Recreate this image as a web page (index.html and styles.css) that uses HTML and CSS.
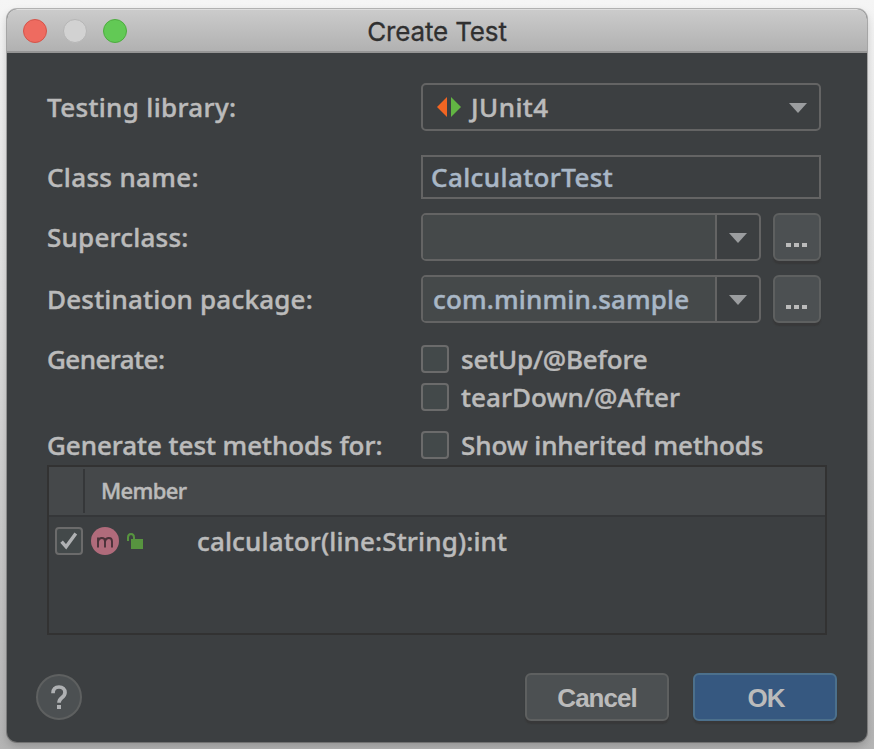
FILE: index.html
```html
<!DOCTYPE html>
<html lang="en">
<head>
<meta charset="utf-8">
<title>Create Test</title>
<link rel="stylesheet" href="styles.css">
</head>
<body>
<main class="window">
  <header class="titlebar">
    <div class="lights"><i class="light close"></i><i class="light minimize"></i><i class="light expand"></i></div>
    <h1 class="title">Create Test</h1>
  </header>
  <form class="content">
    <div class="row row-library">
      <label class="label"><span class="t-library">Testing library:</span></label>
      <div class="select">
        <svg class="junit" width="24" height="20" viewBox="0 0 24 20"><path d="M10 0v20L0 10z" fill="#f26522"/><path d="M14 0v20l10-10z" fill="#62b543"/></svg>
        <span class="t-junit">JUnit4</span>
        <svg class="arrow" width="18" height="10" viewBox="0 0 18 10"><path d="M0 0h18L9 10z"/></svg>
      </div>
    </div>
    <div class="row row-class">
      <label class="label"><span class="t-class">Class name:</span></label>
      <div class="input"><span class="t-classname">CalculatorTest</span></div>
    </div>
    <div class="row row-combo">
      <label class="label"><span class="t-super">Superclass:</span></label>
      <div class="combo"><div class="field"></div><div class="drop"><svg class="arrow" width="18" height="10" viewBox="0 0 18 10"><path d="M0 0h18L9 10z"/></svg></div></div>
      <div class="button browse"><i></i><i></i><i></i></div>
    </div>
    <div class="row row-combo">
      <label class="label"><span class="t-package">Destination package:</span></label>
      <div class="combo"><div class="field"><span class="t-com">com.minmin.sample</span></div><div class="drop"><svg class="arrow" width="18" height="10" viewBox="0 0 18 10"><path d="M0 0h18L9 10z"/></svg></div></div>
      <div class="button browse"><i></i><i></i><i></i></div>
    </div>
    <div class="row row-generate">
      <label class="label"><span class="t-generate">Generate:</span></label>
      <div class="checks">
        <div class="check"><i class="box"></i><span class="t-setup">setUp/@Before</span></div>
        <div class="check"><i class="box"></i><span class="t-teardown">tearDown/@After</span></div>
      </div>
    </div>
    <div class="row row-methods">
      <label class="label"><span class="t-methods">Generate test methods for:</span></label>
      <div class="check"><i class="box"></i><span class="t-inherited">Show inherited methods</span></div>
    </div>
    <section class="table">
      <div class="thead"><div class="th-check"></div><div class="th-member"><span class="t-member">Member</span></div></div>
      <div class="tr">
        <i class="box"><svg width="24" height="24" viewBox="0 0 24 24"><path d="M4.600 12.600l4.500 5.200L18.800 4.600" fill="none" stroke="#afb1b3" stroke-width="3.400"/></svg></i>
        <svg class="method" width="28" height="28" viewBox="0 0 28 28"><circle cx="14" cy="14" r="14" fill="#b06b7b"/><path d="M7 20.500v-10M7 14.500q.6-3.500 3.800-3.500 3.200 0 3.200 3.400v6.100M14 14.500q.6-3.500 3.800-3.500 3.200 0 3.200 3.400v6.100" fill="none" stroke="#4a3239" stroke-width="1.900"/></svg>
        <svg class="lock" width="16" height="16" viewBox="0 0 16 16"><path d="M4 6h12v10H4z" fill="#57943f"/><path d="M1 8V4.500Q1 1 4 1t3 3.500V7" fill="none" stroke="#57943f" stroke-width="2"/></svg>
        <span class="t-calc">calculator(line:String):int</span>
      </div>
    </section>
    <footer class="footer">
      <div class="help"><svg width="16" height="24" viewBox="0 0 16 24"><path d="M2 8.200C2 4.200 4.200 2 8 2s6 2.200 6 5.500c0 2.600-1.400 3.900-3.200 5.300C9 14.200 8 15.200 8 17.800" fill="none" stroke="#afb1b3" stroke-width="3.700"/><path d="M6 20h4v4H6z" fill="#afb1b3"/></svg></div>
      <div class="button cancel"><span class="t-cancel">Cancel</span></div>
      <div class="button ok"><span class="t-ok">OK</span></div>
    </footer>
  </form>
</main>
</body>
</html>
```
FILE: styles.css
```css
* { box-sizing: border-box; }
html { height: 100%; background: linear-gradient(#f5f5f5, #e0e0e0 40%, #b4b4b4); }
body {
  margin: 0;
  height: 749px;
  padding: 9px 7px 7px;
  overflow: hidden;
  color: #bbbbbb;
  font: 500 26px/32px "Noto Sans", "Open Sans", sans-serif;
}
.window {
  height: 733px;
  border-radius: 10px;
  overflow: hidden;
  background: #3c3f41;
  box-shadow: 0 0 0 1px rgba(0, 0, 0, .25), 0 4px 10px rgba(0, 0, 0, .2);
}
.titlebar {
  height: 44px;
  display: grid;
  grid-template-columns: 1fr auto 1fr;
  align-items: center;
  padding: 0 16px;
  background: linear-gradient(#cbcbcb, #b1b1b1);
  border-top: 1px solid #dedede;
  border-bottom: 2px solid #959595;
}
.lights { display: flex; gap: 16px; }
.light { width: 24px; height: 24px; border-radius: 50%; border: 1px solid; }
.close { background: #ee6b60; border-color: #d4544a; }
.minimize { background: #d2d2d2; border-color: #b5b5b5; }
.expand { background: #62c955; border-color: #4dac3f; }
.title { margin: 0; padding-top: 2px; color: #303030; font: 400 26px/32px Inter, sans-serif; letter-spacing: -.15px; -webkit-text-stroke: .3px; }

.content { padding: 30px 40px 0; }
.row { display: flex; }
.label { width: 374px; flex: none; white-space: nowrap; }
.row span, .tr span { white-space: nowrap; }
.row span, .tr span, .th-member span { -webkit-text-stroke: .45px; }
.row-library { height: 48px; align-items: center; }
.select {
  width: 400px; height: 48px;
  display: flex; align-items: center;
  border: 2px solid #646464; border-radius: 5px;
  padding: 0 12px 0 14px;
}
.junit { margin-right: 10px; }
.arrow { fill: #9b9d9f; flex: none; }
.select .arrow { margin-left: auto; margin-top: 2px; }
.row-class { height: 44px; margin-top: 24px; align-items: center; }
.input {
  width: 400px; height: 44px;
  display: flex; align-items: center;
  border: 2px solid #646464; padding-left: 8px; color: #a9b7c6;
}
.row-combo { height: 48px; margin-top: 14px; align-items: center; }
.combo {
  width: 340px; height: 48px; margin-right: 12px;
  display: flex; overflow: hidden;
  border: 2px solid #646464; border-radius: 5px;
}
.field { flex: 1; display: flex; align-items: center; padding-left: 10px; background: #45494a; color: #a9b7c6; }
.drop { width: 44px; display: flex; align-items: center; justify-content: center; border-left: 2px solid #646464; padding-top: 2px; }
.button {
  height: 48px; display: flex; align-items: center; justify-content: center;
  border: 2px solid #5e6060; border-radius: 6px; background: #4c5052;
  box-shadow: 0 3px 1px rgba(54, 54, 54, .7);
}
.browse { width: 48px; gap: 3px; padding: 15px 1px 0 0; }
.browse i { width: 5px; height: 4px; background: #bbb; }
.row-generate { margin-top: 22px; height: 66px; }
.row-generate .label { line-height: 28px; }
.checks { display: flex; flex-direction: column; gap: 10px; }
.check { height: 28px; display: flex; align-items: center; gap: 12px; }
.box {
  width: 28px; height: 28px; flex: none;
  border: 2px solid #6b6b6b; border-radius: 4px; background: #43494a;
}
.row-methods { margin-top: 20px; height: 28px; align-items: center; }
.table { width: 780px; height: 170px; margin-top: 6px; border: 2px solid #323232; }
.thead {
  height: 50px; display: flex; padding-top: 2px; margin-bottom: 10px;
  background: #45484a; border-bottom: 2px solid #353739;
  font-size: 22px;
}
.th-check { width: 36px; height: 44px; border-right: 2px solid #353739; }
.th-member { padding: 5px 0 0 16px; }
.tr { height: 28px; display: flex; align-items: center; padding-left: 6px; }
.tr .box svg { display: block; }
.method { margin-left: 8px; }
.lock { margin: 0 54px 0 8px; }
.footer { height: 48px; margin: 38px -10px 0 -11px; display: flex; align-items: center; }
.help {
  width: 46px; height: 46px; margin-right: auto;
  display: flex; align-items: center; justify-content: center;
  border: 2px solid #5e6060; border-radius: 50%; background: #4c5052;
}
.cancel, .ok { width: 144px; padding-top: 2px; font: 700 26px/32px "Liberation Sans", sans-serif; letter-spacing: -1px; }
.cancel { margin-right: 24px; }
.ok { background: #365880; border-color: #4c708c; padding-left: 2px; }

/* Tracking per label */
.t-library { letter-spacing: .35px; }
.t-junit { letter-spacing: .45px; }
.t-class { letter-spacing: .33px; }
.t-classname { letter-spacing: .4px; }
.t-super { letter-spacing: .22px; }
.t-package { letter-spacing: .2px; }
.t-com { letter-spacing: .17px; }
.t-generate { letter-spacing: -.55px; }
.t-setup { letter-spacing: -.17px; }
.t-teardown { letter-spacing: .07px; }
.t-methods { letter-spacing: -.05px; }
.t-inherited { letter-spacing: -.1px; }
.t-member { letter-spacing: -.65px; }
.t-calc { letter-spacing: .15px; }
```
